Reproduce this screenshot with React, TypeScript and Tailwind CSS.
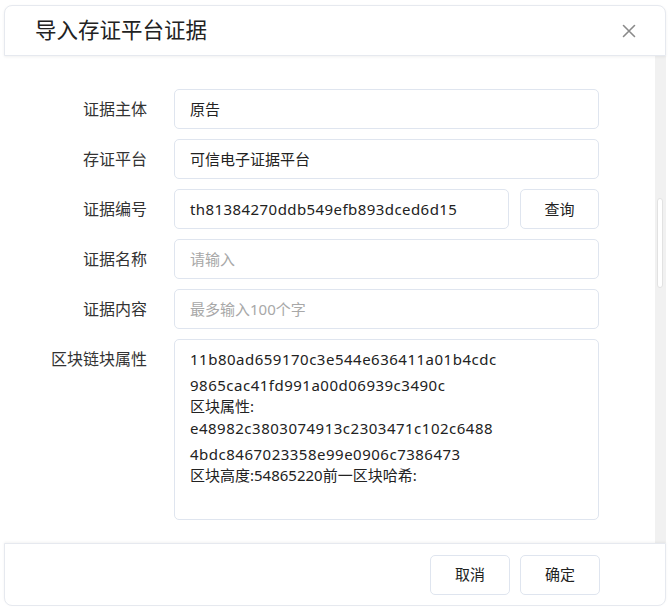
import React from "react";

const font = { fontFamily: '"Noto Sans", "Noto Sans CJK SC", sans-serif' };

function Row({ label, children }: { label: string; children: React.ReactNode }) {
  return (
    <div className="flex items-center h-[40px]">
      <div className="w-[143px] text-right text-[16px] text-[#333]">{label}</div>
      <div className="ml-[27px] flex-1 flex gap-[11px]">{children}</div>
    </div>
  );
}

function Field({ value, placeholder, className = "" }: { value?: React.ReactNode; placeholder?: string; className?: string }) {
  return (
    <div
      className={
        "h-[40px] border border-[#dfe5ef] rounded-[5px] px-[15px] flex items-center text-[15px] " +
        (value ? "text-[#222] " : "text-[#a8a8a8] ") +
        className
      }
    >
      {value || placeholder}
    </div>
  );
}

export default function App() {
  return (
    <div className="w-[670px] h-[611px] bg-white pt-[5px] pl-[4px]" style={font}>
      <div className="w-[662px]">
        <div className="h-[51px] rounded-t-[8px] border border-[#e6e9ef] shadow-[0_1px_3px_rgba(0,0,0,0.06)] flex items-center justify-between pl-[30px] pr-[29px] relative z-10 bg-white">
          <div className="text-[21.5px] text-[#222]">导入存证平台证据</div>
          <svg width="14" height="14" viewBox="0 0 14 14">
            <path d="M1.5 1.5 L12.5 12.5 M12.5 1.5 L1.5 12.5" stroke="#8a8a8a" strokeWidth="1.6" strokeLinecap="round" />
          </svg>
        </div>
        <div className="h-[487px] flex">
          <div className="flex-1 pt-[33px] pr-[56px] flex flex-col gap-[10px]">
            <Row label="证据主体">
              <Field value="原告" className="flex-1" />
            </Row>
            <Row label="存证平台">
              <Field value="可信电子证据平台" className="flex-1" />
            </Row>
            <Row label="证据编号">
              <Field value={<span className="tracking-[0.43px]">th81384270ddb549efb893dced6d15</span>} className="flex-1" />
              <div className="w-[79px] h-[40px] border border-[#dfe5ef] rounded-[5px] flex items-center justify-center text-[15px] text-[#222]">
                查询
              </div>
            </Row>
            <Row label="证据名称">
              <Field placeholder="请输入" className="flex-1" />
            </Row>
            <Row label="证据内容">
              <Field placeholder="最多输入100个字" className="flex-1" />
            </Row>
            <div className="flex items-start">
              <div className="w-[143px] text-right text-[16px] text-[#333] mt-[10px] leading-[21px]">区块链块属性</div>
              <div className="ml-[27px] flex-1 h-[181px] border border-[#dfe5ef] rounded-[5px] px-[15px] pt-[9px] text-[15px] text-[#222] leading-[21px]">
                <div className="tracking-[0.5px]">11b80ad659170c3e544e636411a01b4cdc</div>
                <div className="mt-[5px] tracking-[0.5px]">9865cac41fd991a00d06939c3490c</div>
                <div>区块属性:</div>
                <div className="mt-px tracking-[0.5px]">e48982c3803074913c2303471c102c6488</div>
                <div className="mt-[5px] tracking-[0.5px]">4bdc8467023358e99e0906c7386473</div>
                <div>区块高度:54865220前一区块哈希:</div>
              </div>
            </div>
          </div>
          <div className="w-[11px] bg-[#f1f1f1] relative">
            <div className="absolute left-[2px] top-[142px] w-[6px] h-[90px] rounded-full bg-white border border-[#e2e2e2]" />
          </div>
        </div>
        <div className="h-[63px] rounded-b-[8px] border border-[#e6e9ef] shadow-[0_-1px_3px_rgba(0,0,0,0.05)] flex items-center justify-end gap-[10px] pr-[65px] bg-white relative z-10">
          <div className="w-[80px] h-[40px] border border-[#dfe5ef] rounded-[5px] flex items-center justify-center text-[15px] text-[#222]">
            取消
          </div>
          <div className="w-[80px] h-[40px] border border-[#dfe5ef] rounded-[5px] flex items-center justify-center text-[15px] text-[#222]">
            确定
          </div>
        </div>
      </div>
    </div>
  );
}
